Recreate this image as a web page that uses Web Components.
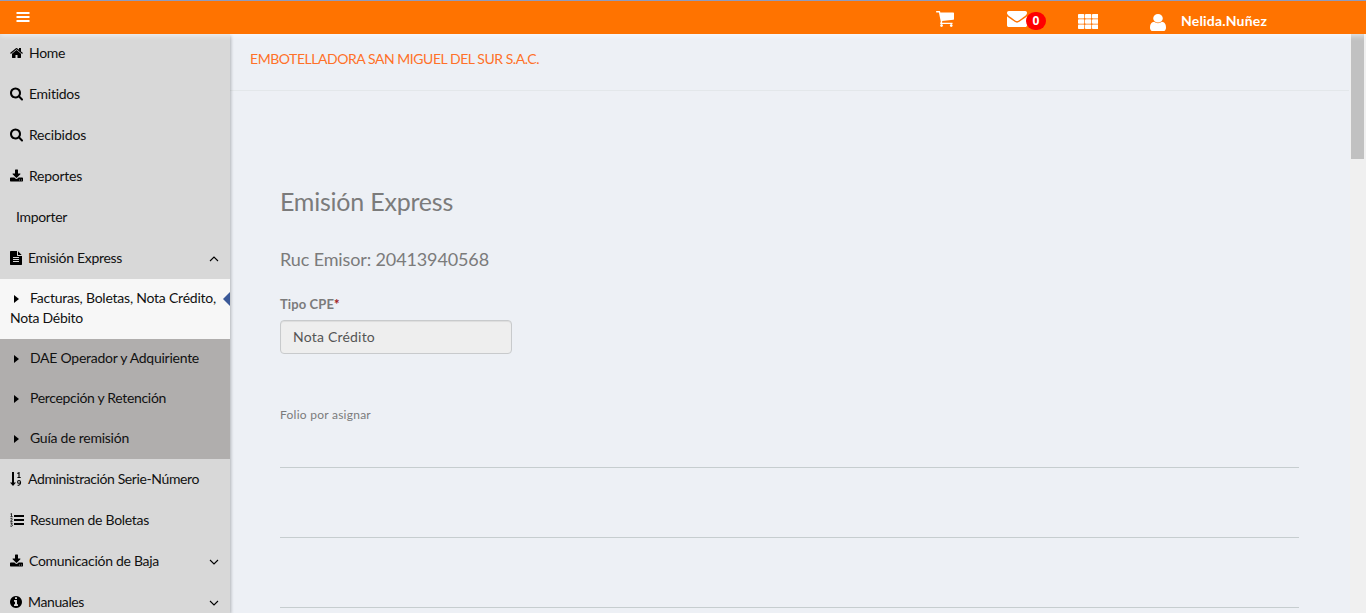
<!DOCTYPE html>
<html lang="es">
<head>
<meta charset="utf-8">
<title>Emisión Express</title>
<style>
html,body{margin:0;height:100%;overflow:hidden}
body{font-family:Lato,"Open Sans",sans-serif;font-size:14px;color:#111;background:#edf0f5}
</style>
</head>
<body>
<app-shell>
  <top-bar slot="header"></top-bar>
  <side-menu slot="menu">
    <menu-row icon="home" gap="6" w="36" first>Home</menu-row>
    <menu-row icon="search" gap="6" w="51">Emitidos</menu-row>
    <menu-row icon="search" gap="6" w="57">Recibidos</menu-row>
    <menu-row icon="download" gap="6" w="53">Reportes</menu-row>
    <menu-row gap="6" w="51">Importer</menu-row>
    <menu-row icon="file" gap="6" w="94" chevron="up">Emisión Express</menu-row>
    <sub-row active w="186">Facturas, Boletas, Nota Crédito,<fit-text slot="more" w="73">Nota Débito</fit-text></sub-row>
    <sub-row w="169">DAE Operador y Adquiriente</sub-row>
    <sub-row w="136">Percepción y Retención</sub-row>
    <sub-row w="99">Guía de remisión</sub-row>
    <menu-row icon="sort" gap="6" w="171">Administración Serie-Número</menu-row>
    <menu-row icon="list" gap="6" w="119">Resumen de Boletas</menu-row>
    <menu-row icon="download" gap="6" w="130" chevron="down">Comunicación de Baja</menu-row>
    <menu-row icon="info" gap="6" w="56" chevron="down">Manuales</menu-row>
  </side-menu>
  <express-page></express-page>
  <scroll-rail slot="rail"></scroll-rail>
</app-shell>
<script>
const define = (name, html, setup) => {
  const t = document.createElement('template');
  t.innerHTML = html;
  customElements.define(name, class extends HTMLElement {
    connectedCallback() {
      if (this.shadowRoot) return;
      const root = this.attachShadow({mode: 'open'});
      root.append(t.content.cloneNode(true));
      if (setup) setup(this, root);
    }
  });
};

/* icon: viewBox, width, height, drawing */
const ICONS = {
  home: ['64 0 1664 1792', 13, 14, '<path d="M1472 992v480q0 26-19 45t-45 19h-384v-384h-256v384h-384q-26 0-45-19t-19-45v-480q0-1 .5-3t.5-3l575-474 575 474q1 2 1 6zm223-69l-62 74q-8 9-21 11h-3q-13 0-21-7l-692-577-692 577q-12 8-24 7-13-2-21-11l-62-74q-8-10-7-23.5t11-21.5l719-599q32-26 76-26t76 26l244 204v-195q0-14 9-23t23-9h192q14 0 23 9t9 23v408l219 182q10 8 11 21.5t-7 23.5z"/>'],
  search: ['64 64 1664 1792', 13, 14, '<path d="M1216 832q0-185-131.5-316.5t-316.5-131.5-316.5 131.5-131.5 316.5 131.5 316.5 316.5 131.5 316.5-131.5 131.5-316.5zm512 832q0 52-38 90t-90 38q-54 0-90-38l-343-342q-179 124-399 124-143 0-273.5-55.5t-225-150-150-225-55.5-273.5 55.5-273.5 150-225 225-150 273.5-55.5 273.5 55.5 225 150 150 225 55.5 273.5q0 220-124 399l343 343q37 37 37 90z"/>'],
  download: ['64 -64 1664 1792', 13, 14, '<path d="M1344 1344q0-26-19-45t-45-19-45 19-19 45 19 45 45 19 45-19 19-45zm256 0q0-26-19-45t-45-19-45 19-19 45 19 45 45 19 45-19 19-45zm128-224v320q0 40-28 68t-68 28h-1472q-40 0-68-28t-28-68v-320q0-40 28-68t68-28h465l135 136q58 56 136 56t136-56l136-136h464q40 0 68 28t28 68zm-325-569q17 41-14 70l-448 448q-18 19-45 19t-45-19l-448-448q-31-29-14-70 17-39 59-39h256v-448q0-26 19-45t45-19h256q26 0 45 19t19 45v448h256q42 0 59 39z"/>'],
  file: ['128 0 1536 1792', 12, 14, '<path d="M1596 476q14 14 28 36h-472v-472q22 14 36 28zm-476 164h544v1056q0 40-28 68t-68 28h-1344q-40 0-68-28t-28-68v-1600q0-40 28-68t68-28h800v544q0 40 28 68t68 28zm160 736v-64q0-14-9-23t-23-9h-704q-14 0-23 9t-9 23v64q0 14 9 23t23 9h704q14 0 23-9t9-23zm0-256v-64q0-14-9-23t-23-9h-704q-14 0-23 9t-9 23v64q0 14 9 23t23 9h704q14 0 23-9t9-23zm0-256v-64q0-14-9-23t-23-9h-704q-14 0-23 9t-9 23v64q0 14 9 23t23 9h704q14 0 23-9t9-23z"/>'],
  cart: ['64 256 1664 1408', 18, 16, '<path d="M704 1536q0 52-38 90t-90 38-90-38-38-90 38-90 90-38 90 38 38 90zm896 0q0 52-38 90t-90 38-90-38-38-90 38-90 90-38 90 38 38 90zm128-1088v512q0 24-16.5 42.5t-40.5 21.5l-1044 122q13 60 13 70 0 16-24 64h920q26 0 45 19t19 45-19 45-45 19h-1024q-26 0-45-19t-19-45q0-11 8-31.5t16-36 21.5-40 15.5-29.5l-177-823h-204q-26 0-45-19t-19-45 19-45 45-19h256q16 0 28.5 6.5t19.5 15.5 13 24.5 8 26 5.5 29.5 4.5 26h1201q26 0 45 19t19 45z"/>'],
  mail: ['0 256 1792 1408', 20, 16, '<path d="M1792 710v794q0 66-47 113t-113 47h-1472q-66 0-113-47t-47-113v-794q44 49 101 87 362 246 497 345 57 42 92.5 65.5t94.5 48 110 24.5h2q51 0 110-24.5t94.5-48 92.5-65.5q170-123 498-345 57-39 100-87zm0-294q0 79-49 151t-122 123q-376 261-468 325-10 7-42.5 31t-54 38.5-52 32.5-57.5 27-50 9h-2q-23 0-50-9t-57.5-27-52-32.5-54-38.5-42.5-31q-91-64-262-182.5t-205-142.5q-62-42-117-115.5t-55-136.5q0-78 41.5-130t118.5-52h1472q65 0 112.5 47t47.5 113z"/>'],
  user: ['256 128 1280 1536', 16, 17, '<path d="M1536 1399q0 109-62.5 187t-150.5 78h-854q-88 0-150.5-78t-62.5-187q0-85 8.5-160.5t31.5-152 58.5-131 94-89 134.5-34.5q131 128 313 128t313-128q76 0 134.5 34.5t94 89 58.5 131 31.5 152 8.5 160.5zm-256-887q0 159-112.5 271.5t-271.5 112.5-271.5-112.5-112.5-271.5 112.5-271.5 271.5-112.5 271.5 112.5 112.5 271.5z"/>'],
  info: ['128 0 1536 1792', 12, 14, '<path d="M1152 1376v-160q0-14-9-23t-23-9h-96v-512q0-14-9-23t-23-9h-320q-14 0-23 9t-9 23v160q0 14 9 23t23 9h96v320h-96q-14 0-23 9t-9 23v160q0 14 9 23t23 9h448q14 0 23-9t9-23zm-128-896v-160q0-14-9-23t-23-9h-192q-14 0-23 9t-9 23v160q0 14 9 23t23 9h192q14 0 23-9t9-23zm640 416q0 209-103 385.5t-279.5 279.5-385.5 103-385.5-103-279.5-279.5-103-385.5 103-385.5 279.5-279.5 385.5-103 385.5 103 279.5 279.5 103 385.5z"/>'],
  sort: ['0 0 12 14', 12, 14, '<path d="M2 0h2v10.5h2L3 14 0 10.500h2z"/><path d="M7.300 1.500 9 .7V5.500M7.400 5.500H10.700" fill="none" stroke="currentColor" stroke-width="1.100"/><circle cx="9" cy="9.900" r="1.400" fill="none" stroke="currentColor" stroke-width="1.100"/><path d="M10.500 9.800c.2 2.300-.8 3.700-2.800 3.600" fill="none" stroke="currentColor" stroke-width="1.100"/>'],
  list: ['0 0 14 14', 14, 14, '<path d="M4 2h10v2H4zM4 6h10v2H4zM4 10h10v2H4z"/><path d="M.5 1 1.500.5V3.600M.4 3.700H2.700M.4 5.700Q2.300 4.700 2.300 6.100L.6 8.400H2.600M.4 10H2.300L1.300 11.300Q2.700 11.500 2.300 12.800 1.600 13.800.3 13" fill="none" stroke="currentColor" stroke-width=".8"/>'],
  bars: ['0 0 14 10', 14, 10, '<path d="M.5 0h13v2H.5zM.5 4h13v2H.5zM.5 8h13v2H.5z"/>'],
  grid: ['0 0 20 15', 20, 15, [0, 5.25, 10.5].map(y => [0, 7, 14].map(x => `<rect x="${x}" y="${y}" width="6.300" height="4.500" rx=".8"/>`).join('')).join('')],
  caret: ['0 0 5 8', 5, 8, '<path d="M0 0 5 4 0 8z"/>'],
  up: ['0 0 10 6', 10, 6, '<path d="M1 5 5 1 9 5" fill="none" stroke="currentColor" stroke-width="1.100"/>'],
  down: ['0 0 10 6', 10, 6, '<path d="M1 1 5 5 9 1" fill="none" stroke="currentColor" stroke-width="1.100"/>']
};

define('ui-icon', '<style>:host{display:block;flex:none}svg{display:block;fill:currentColor}</style>', (el, root) => {
  const [vb, w, h, body] = ICONS[el.getAttribute('name')];
  root.innerHTML += `<svg width="${w}" height="${h}" viewBox="${vb}" preserveAspectRatio="none">${body}</svg>`;
});

/* one line of text, tracked so that it fills the width in w */
define('fit-text', '<style>:host{display:inline-block;white-space:nowrap}</style><span><slot></slot></span>', (el, root) => {
  const span = root.querySelector('span');
  const n = el.textContent.trim().length;
  const fit = () => {
    span.style.letterSpacing = '0';
    const natural = span.getBoundingClientRect().width;
    if (natural) span.style.letterSpacing = (el.getAttribute('w') - natural) / n + 'px';
  };
  fit();
  requestAnimationFrame(fit);
});

define('app-shell', `<style>
:host{display:grid;grid-template:34px 1fr / 230px 1fr 16px;height:100vh;overflow:hidden}
.head{grid-column:1/-1;z-index:3;position:relative}
.menu{z-index:2;position:relative;min-height:0}
.main,.rail{min-width:0;min-height:0}
.main{overflow:hidden}
</style><div class="head"><slot name="header"></slot></div><div class="menu"><slot name="menu"></slot></div><div class="main"><slot></slot></div><div class="rail"><slot name="rail"></slot></div>`);

define('top-bar', `<style>
:host{display:flex;box-sizing:border-box;height:34px;background:#ff7300;border-top:1px solid #8f9bbd;color:#fff;box-shadow:0 2px 5px rgba(255,255,255,.6);align-items:flex-start}
.bars{margin:11px 0 0 16px}.cart{margin:10px 0 0 906px}.mail{margin:10px 0 0 53px}
.badge{box-sizing:border-box;width:20px;height:18px;margin:11px 0 0 -1px;border-radius:9px;background:#f00;text-align:center;font:bold 12px/18px "Open Sans",sans-serif}
.grid{margin:13px 0 0 32px}.user{margin:13px 0 0 52px}.name{margin:11px 0 0 15px;font-weight:bold;line-height:18px}
</style><ui-icon class="bars" name="bars"></ui-icon><ui-icon class="cart" name="cart"></ui-icon><ui-icon class="mail" name="mail"></ui-icon><span class="badge">0</span><ui-icon class="grid" name="grid"></ui-icon><ui-icon class="user" name="user"></ui-icon><fit-text class="name" w="86">Nelida.Nuñez</fit-text>`);

define('side-menu', `<style>:host{display:block;box-sizing:border-box;height:579px;background:#d8d8d8;box-shadow:1px 1px 3px rgba(0,0,0,.25);overflow:hidden}
:host{clip-path:inset(0 -6px 0 0)}</style><slot></slot>`);

define('menu-row', `<style>
:host{display:flex;align-items:center;box-sizing:border-box;height:41px;padding:0 11px 2px 10px}
:host([first]){height:40px;padding-bottom:3px}
fit-text{line-height:20px}
ui-icon{color:#000}
.chev{margin:3px 0 0 auto}
</style>`, (el, root) => {
  const icon = el.getAttribute('icon'), chev = el.getAttribute('chevron');
  root.innerHTML += `${icon ? `<ui-icon name="${icon}"></ui-icon>` : ''}<fit-text style="margin-left:${el.getAttribute('gap')}px"></fit-text>${chev ? `<ui-icon class="chev" name="${chev}"></ui-icon>` : ''}`;
  const t = root.querySelector('fit-text');
  t.setAttribute('w', el.getAttribute('w'));
  t.replaceWith(Object.assign(t.cloneNode(), {textContent: el.textContent}));
});

define('sub-row', `<style>
:host{display:block;position:relative;box-sizing:border-box;padding:9px 10px 11px;background:#b0aead;line-height:20px}
:host([active]){background:#f7f7f7}
.line{display:flex;align-items:center;height:20px;padding-left:4px}
.line ui-icon{margin:1px 11px 0 0;color:#000}
slot[name=more]{display:block}
.mark{display:none;position:absolute;right:0;top:13px;border:7px solid transparent;border-right-color:#3b5998;border-left:0}
:host([active]) .mark{display:block}
</style><div class="line"><ui-icon name="caret"></ui-icon></div><slot name="more"></slot><i class="mark"></i>`, (el, root) => {
  const t = document.createElement('fit-text');
  t.setAttribute('w', el.getAttribute('w'));
  t.textContent = el.firstChild.textContent.trim();
  root.querySelector('.line').append(t);
});

define('express-page', `<style>
:host{display:block;color:#7b7b7b}
.company{box-sizing:border-box;height:57px;padding:15px 0 0 20px;margin-right:1px;border-bottom:1px solid #e3e7ea;color:#ff7128;line-height:20px}
.body{padding:93px 51px 0 50px;display:flex;flex-direction:column;align-items:flex-start}
.title{font-size:25px;line-height:34px}
.ruc{font-size:18px;line-height:24px;margin-top:29px}
.label{font-size:13px;line-height:18px;margin-top:24px;display:flex;font-weight:bold}
.label b{color:#a11d1d}
.field{box-sizing:border-box;width:232px;height:34px;margin-top:7px;padding:6px 12px;border:1px solid #c8cacc;border-radius:4px;background:#eee;color:#555;line-height:20px;box-shadow:inset 0 1px 1px rgba(0,0,0,.075)}
.folio{font-size:12px;line-height:18px;margin-top:52px}
.rule{align-self:stretch;height:1px;background:#c6cdcf;margin-top:69px}
.folio + .rule{margin-top:43px}
</style>
<div class="company"><fit-text w="289">EMBOTELLADORA SAN MIGUEL DEL SUR S.A.C.</fit-text></div>
<div class="body">
<fit-text class="title" w="173">Emisión Express</fit-text>
<fit-text class="ruc" w="209">Ruc Emisor: 20413940568</fit-text>
<div class="label"><fit-text w="54">Tipo CPE</fit-text><b>*</b></div>
<div class="field"><fit-text w="82">Nota Crédito</fit-text></div>
<fit-text class="folio" w="91">Folio por asignar</fit-text>
<div class="rule"></div><div class="rule"></div><div class="rule"></div>
</div>`);

define('scroll-rail', `<style>:host{display:block;height:579px;background:#f0f0f0}div{width:13px;height:125px;margin-left:1px;background:#c1c1c1}</style><div></div>`);
</script>
</body>
</html>
